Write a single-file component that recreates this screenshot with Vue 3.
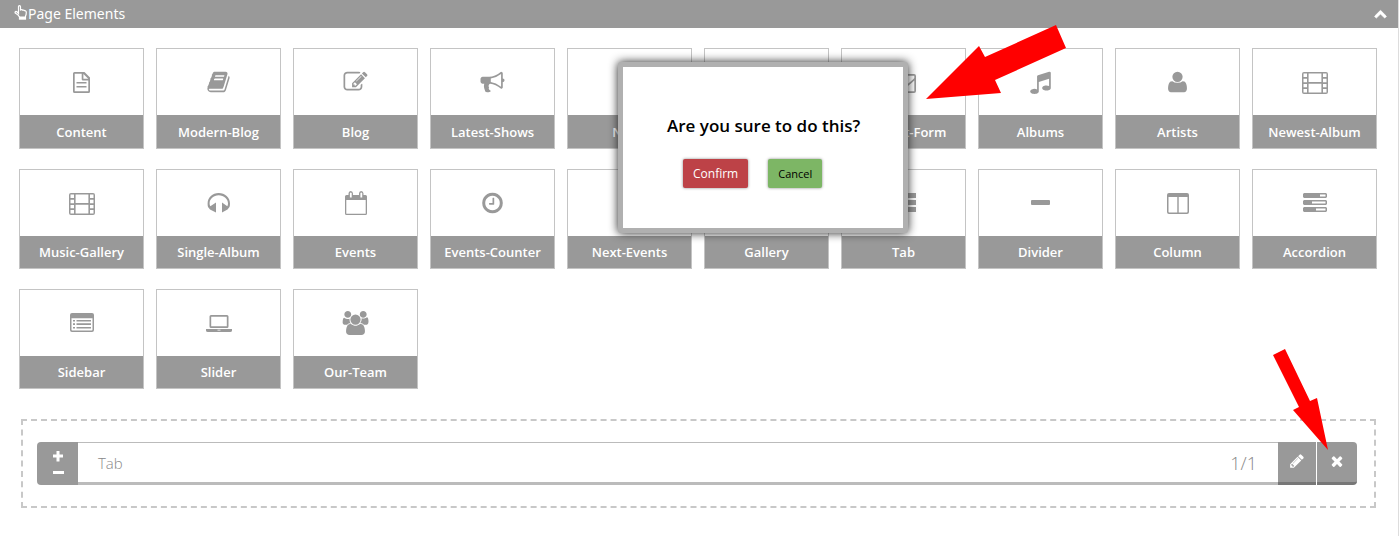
<script setup>
const WIDE = '-112 0 2016 1792'
const PX = '0 0 27 24'

const icons = {
  file: { box: PX, d: 'M6.500 2H16.500L22 7.500V21.500Q22 23 20.500 23H6.500Q5 23 5 21.500V3.500Q5 2 6.500 2ZM6.700 3.700V21.300H20.300V10.500H15Q13.700 10.500 13.700 9.200V3.700ZM15.400 4V8.800H20.200ZM8.500 12H18.500V13.600H8.500ZM8.500 16H18.500V17.600H8.500Z' },
  book: { box: WIDE, d: 'M1703 478q40 57 18 129l-275 906q-19 64-76.500 107.500t-122.500 43.500h-923q-77 0-148.500-53.500t-99.500-131.500q-24-67-2-127 0-4 3-27t4-37q1-8-3-21.500t-3-19.500q2-11 8-21t16.500-23.500 16.500-23.500q23-38 45-91.500t30-91.500q3-10 .5-30t-.5-28q3-11 17-28t17-23q21-36 42-92t25-90q1-9-2.500-32t.5-28q4-13 22-30.500t22-22.500q19-26 42.500-84.500t27.500-96.500q1-8-3-25.500t-2-26.500q2-8 9-18t18-23 17-21q8-12 16.500-30.500t15-35 16-36 19.500-32 26.500-23.500 36-11.500 47.500 5.500l-1 3q38-9 51-9h761q74 0 114 56t18 130l-274 906q-36 119-71.500 153.500t-128.500 34.500h-869q-27 0-38 15-11 16-1 43 24 70 144 70h923q29 0 56-15.500t35-41.500l300-987q7-22 5-57 38 15 59 43zm-1064 2q-4 13 2 22.500t20 9.500h608q13 0 25.500-9.500t16.500-22.500l21-64q4-13-2-22.500t-20-9.500h-608q-13 0-25.500 9.500t-16.500 22.500zm-83 256q-4 13 2 22.500t20 9.500h608q13 0 25.500-9.500t16.500-22.500l21-64q4-13-2-22.500t-20-9.500h-608q-13 0-25.500 9.500t-16.500 22.500z' },
  edit: { box: WIDE, d: 'M888 1184l116-116-152-152-116 116v56h96v96h56zm440-720q-16-16-33 1l-350 350q-17 17-1 33t33-1l350-350q17-17 1-33zm80 594v190q0 119-84.500 203.500t-203.500 84.500h-832q-119 0-203.500-84.500t-84.500-203.500v-832q0-119 84.500-203.500t203.500-84.500h832q63 0 117 25 15 7 18 23 3 17-9 29l-49 49q-14 14-32 8-23-6-45-6h-832q-66 0-113 47t-47 113v832q0 66 47 113t113 47h832q66 0 113-47t47-113v-126q0-13 9-22l64-64q15-15 35-7t20 29zm-96-738l288 288-672 672h-288v-288zm444 132l-92 92-288-288 92-92q28-28 68-28t68 28l152 152q28 28 28 68t-28 68z' },
  horn: { box: WIDE, d: 'M1664 640q53 0 90.500 37.500t37.500 90.500-37.500 90.500-90.500 37.500v384q0 52-38 90t-90 38q-417-347-812-380-58 19-91 66t-31 100.500 40 92.500q-20 33-23 65.500t6 58 33.500 55 48 50 61.500 50.500q-29 58-111.500 83t-168.500 11.500-132-55.500q-7-23-29.500-87.500t-32-94.500-23-89-15-101 3.500-98.500 22-110.500h-122q-66 0-113-47t-47-113v-192q0-66 47-113t113-47h480q435 0 896-384 52 0 90 38t38 90v384zm-128 604v-954q-394 302-768 343v270q377 42 768 341z' },
  mail: { box: PX, d: 'M4 4H24Q26 4 26 6V21Q26 23 24 23H4Q2 23 2 21V6Q2 4 4 4ZM3.700 5.700V8Q4.500 9.500 12 15.300Q14 16.600 16 15.300Q23.500 9.500 24.300 8V5.700ZM3.700 10.600V21.300H24.300V10.600Q22 13 17 16.800Q14 18.800 11 16.800Q6 13 3.700 10.600Z' },
  music: { box: WIDE, d: 'M1664 224v1120q0 50-34 89t-86 60.500-103.500 32-96.500 10.500-96.500-10.500-103.500-32-86-60.500-34-89 34-89 86-60.500 103.500-32 96.500-10.500q105 0 192 39v-537l-768 237v709q0 50-34 89t-86 60.500-103.500 32-96.500 10.500-96.500-10.500-103.500-32-86-60.500-34-89 34-89 86-60.500 103.500-32 96.500-10.500q105 0 192 39v-967q0-31 19-56.500t49-35.500l832-256q12-4 28-4 40 0 68 28t28 68z' },
  user: { box: WIDE, d: 'M1600 1399q0 109-62.500 187t-150.500 78h-982q-88 0-150.500-78t-62.500-187q0-85 8.500-160.500t31.500-152 58.500-131 94-89 134.500-34.500q131 128 377 128t377-128q76 0 134.500 34.500t94 89 58.500 131 31.500 152 8.500 160.500zm-320-887q0 159-112.500 271.500t-271.500 112.500-271.500-112.500-112.500-271.500 112.500-271.500 271.500-112.500 271.500 112.500 112.500 271.500z' },
  film: { box: PX, d: 'M3 2H25Q27 2 27 4V22Q27 24 25 24H3Q1 24 1 22V4Q1 2 3 2ZM2.500 3.600V7H6V3.600ZM2.500 8.800V12.300H6V8.800ZM2.500 14V17.300H6V14ZM2.500 19V22.500H6V19ZM22 3.600V7H25.500V3.600ZM22 8.800V12.300H25.500V8.800ZM22 14V17.300H25.500V14ZM22 19V22.500H25.500V19ZM7.600 3.500V12.100H20.400V3.500ZM7.600 13.700V22.500H20.400V13.700Z' },
  phones: { box: PX, d: 'M3 16Q2.600 14.500 2.600 12.500C2.600 6.500 7.500 2 13.700 2S25 6.500 25 12.500Q25 14.500 24.500 16L22.500 18.500L17 21.500V11.500L22.300 15.200Q23 14 23 12.500C23 8 19 4.300 13.700 4.300S4.600 8 4.600 12.500Q4.600 14 5.300 15.200L11 11.500V21.500L5 18.500Z' },
  calendar: { box: PX, d: 'M4.500 4H6.500V2.500Q6.500 0 8.700 0T11 2.500V4H17V2.500Q17 0 19.200 0T21.500 2.500V4H23.500Q25 4 25 5.500V22.500Q25 24 23.500 24H4.500Q3 24 3 22.500V5.500Q3 4 4.500 4ZM4.300 9V22.700H23.700V9ZM7.900 2V6.500H9.700V2Q8.800 1 7.900 2ZM18.400 2V6.500H20.200V2Q19.300 1 18.400 2Z' },
  clock: { box: WIDE, d: 'M1024 544v448q0 14-9 23t-23 9h-320q-14 0-23-9t-9-23v-64q0-14 9-23t23-9h224v-352q0-14 9-23t23-9h64q14 0 23 9t9 23zm416 352q0-148-73-273t-198-198-273-73-273 73-198 198-73 273 73 273 198 198 273 73 273-73 198-198 73-273zm224 0q0 209-103 385.500t-279.500 279.500-385.500 103-385.500-103-279.500-279.500-103-385.500 103-385.500 279.500-279.500 385.500-103 385.500 103 279.500 279.500 103 385.500z' },
  list: { box: PX, d: 'M2 2H8V7H2ZM10 2H26V7H10ZM2 9H8V14H2ZM10 9H26V14H10ZM2 16H8V21H2ZM10 16H26V21H10Z' },
  minus: { box: PX, d: 'M5 9H22Q23 9 23 10V13Q23 14 22 14H5Q4 14 4 13V10Q4 9 5 9Z' },
  columns: { box: PX, d: 'M5 2H23Q25 2 25 4V21Q25 23 23 23H5Q3 23 3 21V4Q3 2 5 2ZM4.500 6V20.800Q4.500 21.500 5.200 21.500H13.300V6ZM14.700 6V21.500H22.800Q23.500 21.500 23.500 20.800V6Z' },
  tasks: { box: PX, d: 'M3 2H25L26 3V6L25 7H3L2 6V3ZM3 9H25L26 10V13L25 14H3L2 13V10ZM3 16H25L26 17V20L25 21H3L2 20V17ZM19 3.600V5.400H24.500V3.600ZM11 10.600V12.400H24.500V10.600ZM15 17.600V19.400H24.500V17.600Z' },
  panel: { box: PX, d: 'M4 2H24Q26 2 26 4V19Q26 21 24 21H4Q2 21 2 19V4Q2 2 4 2ZM3.500 7.200V18.700Q3.500 19.500 4.300 19.500H23.700Q24.500 19.500 24.500 18.700V7.200ZM5 9H7V10.600H5ZM8.500 9H23V10.600H8.500ZM5 12.300H7V13.900H5ZM8.500 12.300H23V13.900H8.500ZM5 16H7V17.600H5ZM8.500 16H23V17.600H8.500Z' },
  laptop: { box: PX, d: 'M6 4H22Q23.500 4 23.500 5.500V15.500Q23.500 17 22 17H6Q4.500 17 4.500 15.500V5.500Q4.500 4 6 4ZM6.200 5.700V15.300H21.800V5.700ZM1 18H27V19.500Q27 21 25 21H3Q1 21 1 19.500ZM12.500 18.800V19.600H15.500V18.800Z' },
  team: { box: '16 0 2016 1792', d: 'M657 896q-162 5-265 128h-134q-82 0-138-40.500t-56-118.500q0-353 124-353 6 0 43.500 21t97.500 42.500 119 21.500q67 0 133-23-5 37-5 66 0 159 93 293zm1071 637q0 120-73 189.500t-194 69.500h-874q-121 0-194-69.500t-73-189.500q0-53 3.500-103.500t14-109 26.500-108.500 43-97.500 62-81 85.500-53.500 111.500-20q10 0 43 21.500t73 48 107 48 135 21.500 135-21.500 107-48 73-48 43-21.500q61 0 111.500 20t85.500 53.500 62 81 43 97.500 26.500 108.500 14 109 3.500 103.500zm-1024-1277q0 106-75 181t-181 75-181-75-75-181 75-181 181-75 181 75 75 181zm704 384q0 159-112.500 271.500t-271.500 112.500-271.500-112.500-112.500-271.500 112.500-271.500 271.500-112.500 271.500 112.500 112.500 271.500zm576 225q0 78-56 118.500t-138 40.500h-134q-103-123-265-128 93-134 93-293 0-29-5-66 66 23 133 23 59 0 119-21.500t97.500-42.500 43.500-21q124 0 124 353zm-128-609q0 106-75 181t-181 75-181-75-75-181 75-181 181-75 181 75 75 181z' },
}

const tiles = [
  ['Content', 'file'], ['Modern-Blog', 'book'], ['Blog', 'edit'], ['Latest-Shows', 'horn'], ['News', ''],
  ['', ''], ['Contact-Form', 'mail'], ['Albums', 'music'], ['Artists', 'user'], ['Newest-Album', 'film'],
  ['Music-Gallery', 'film'], ['Single-Album', 'phones'], ['Events', 'calendar'], ['Events-Counter', 'clock'], ['Next-Events', ''],
  ['Gallery', ''], ['Tab', 'list'], ['Divider', 'minus'], ['Column', 'columns'], ['Accordion', 'tasks'],
  ['Sidebar', 'panel'], ['Slider', 'laptop'], ['Our-Team', 'team'],
].map(([label, icon]) => ({ label, icon: icons[icon] }))
</script>

<template>
  <main class="page">
    <header class="bar">
      <svg class="hand" viewBox="0 0 14 15" aria-hidden="true">
        <path d="M4.500 8.500V1.800Q4.500 .7 5.500 .7T6.500 1.800V5Q8 4.300 8.700 5.200Q10 4.700 10.500 5.700Q12.300 5.500 12.300 7.500Q12.300 9.500 11.500 11V13.800H5.500V12Q4.500 10 2 8.500Q.7 7.800 1.200 6.800Q2 6 3.200 7Z" />
        <path class="cuff" d="M5 11.500H12V14.400H5Z" />
      </svg>
      <h1>Page Elements</h1>
      <button class="toggle" type="button" aria-label="Collapse">
        <svg viewBox="0 0 1792 1792"><path d="M1683 1331l-166 165q-19 19-45 19t-45-19l-531-531-531 531q-19 19-45 19t-45-19l-166-165q-19-19-19-45.500t19-45.500l742-741q19-19 45-19t45 19l742 741q19 19 19 45.500t-19 45.500z" /></svg>
      </button>
    </header>

    <section class="tiles">
      <button v-for="(t, i) in tiles" :key="i" class="tile" type="button">
        <span class="pic">
          <svg v-if="t.icon" :viewBox="t.icon.box" aria-hidden="true"><path fill-rule="evenodd" :d="t.icon.d" /></svg>
        </span>
        <span class="label">{{ t.label }}</span>
      </button>
    </section>

    <section class="drop">
      <div class="row">
        <div class="size">
          <button type="button" aria-label="Wider"><svg viewBox="0 0 12 12"><path d="M4.500 1H7.500V4.500H11V7.500H7.500V11.500H4.500V7.500H1V4.500H4.500Z" /></svg></button>
          <button type="button" aria-label="Narrower"><svg viewBox="0 0 12 12"><path d="M1 5H12V8H1Z" /></svg></button>
        </div>
        <div class="body">
          <span class="name">Tab</span>
          <span class="ratio">1/1</span>
        </div>
        <button class="act" type="button" aria-label="Edit">
          <svg viewBox="0 0 1792 1792"><path d="M491 1536l91-91-235-235-91 91v107h128v128h107zm523-928q0-22-22-22-10 0-17 7l-542 542q-7 7-7 17 0 22 22 22 10 0 17-7l542-542q7-7 7-17zm-54-192l416 416-832 832h-416v-416zm683 96q0 53-37 90l-166 166-416-416 166-165q36-38 90-38 53 0 91 38l235 234q37 39 37 91z" /></svg>
        </button>
        <button class="act last" type="button" aria-label="Remove">
          <svg viewBox="0 0 1792 1792"><path d="M1490 1322q0 40-28 68l-136 136q-28 28-68 28t-68-28l-294-294-294 294q-28 28-68 28t-68-28l-136-136q-28-28-28-68t28-68l294-294-294-294q-28-28-28-68t28-68l136-136q28-28 68-28t68 28l294 294 294-294q28-28 68-28t68 28l136 136q28 28 28 68t-28 68l-294 294 294 294q28 28 28 68z" /></svg>
        </button>
      </div>
    </section>

    <div class="dialog" role="dialog" aria-labelledby="question">
      <p id="question">Are you sure to do this?</p>
      <div class="choices">
        <button class="confirm" type="button">Confirm</button>
        <button class="cancel" type="button">Cancel</button>
      </div>
    </div>

    <svg class="arrow big" viewBox="0 0 140 74" aria-hidden="true"><path d="M0 74L53 21L59 32L130 0L140 23L69 55L75 68Z" /></svg>
    <svg class="arrow small" viewBox="0 0 55 101" aria-hidden="true"><path d="M55 101L44 49L37 52L12 0L0 6L26 58L20 61Z" /></svg>
  </main>
</template>

<style>
body {
  background: #fff;
}
</style>

<style scoped>
.page {
  position: relative;
  box-sizing: border-box;
  min-height: 100vh;
  border-right: 1px solid #ddd;
  font-family: "Open Sans", "Noto Sans", sans-serif;
  font-size: 13px;
}
button {
  margin: 0;
  padding: 0;
  border: 0;
  background: none;
  font: inherit;
  color: inherit;
}
svg {
  display: block;
  fill: currentColor;
}
.bar {
  display: flex;
  align-items: center;
  height: 28px;
  padding: 0 11px 0 14px;
  background: #999;
  color: #fff;
}
.hand {
  width: 14px;
  height: 15px;
  margin-bottom: 4px;
  fill: none;
  stroke: currentColor;
  stroke-width: 1.2;
}
.hand .cuff {
  fill: currentColor;
  stroke: none;
}
.bar h1 {
  flex: 1;
  margin: 0;
  font-family: "Noto Sans", "Open Sans", sans-serif;
  font-size: 14px;
  font-weight: 400;
  line-height: 20px;
}
.toggle svg {
  width: 13px;
  height: 13px;
  margin-bottom: 2px;
  stroke: currentColor;
  stroke-width: 90;
}
.tiles {
  display: grid;
  grid-template-columns: repeat(auto-fill, minmax(125px, 1fr));
  grid-template-rows: 101px;
  grid-auto-rows: 100px;
  gap: 20px 12px;
  padding: 20px 21px 0 19px;
}
.tile {
  display: flex;
  flex-direction: column;
  border: 1px solid #c4c4c4;
  color: #999;
}
.pic {
  display: flex;
  align-items: center;
  justify-content: center;
  width: 100%;
  height: 66px;
}
.pic svg {
  width: 27px;
  height: 24px;
}
.label {
  flex: 1;
  display: flex;
  align-items: center;
  justify-content: center;
  width: 100%;
  background: #999;
  color: #fff;
  font-weight: 600;
  line-height: 18px;
}
.drop {
  margin: 30px 22px 0 21px;
  padding: 21px 17px 21px 14px;
  border: 2px dashed #c8c8c8;
}
.row {
  display: flex;
  height: 43px;
}
.size {
  display: flex;
  flex-direction: column;
  align-items: center;
  justify-content: center;
  gap: 4px;
  width: 41px;
  border-radius: 4px 0 0 4px;
  background: #999;
  color: #fff;
}
.size svg {
  width: 12px;
  height: 12px;
}
.body {
  flex: 1;
  display: flex;
  align-items: center;
  justify-content: space-between;
  padding: 0 21px 0 20px;
  border-top: 1px solid #bbb;
  border-bottom: 3px solid #bbb;
  color: #888;
  font-size: 15px;
  font-weight: 300;
  line-height: 20px;
}
.ratio {
  font-size: 18px;
}
.act {
  display: flex;
  align-items: center;
  justify-content: center;
  width: 38px;
  border-bottom: 3px solid #777;
  background: #999;
  color: #fff;
}
.act svg {
  width: 16px;
  height: 16px;
  margin-bottom: 2px;
}
.act.last {
  width: 40px;
  margin-left: 1px;
  border-radius: 0 4px 4px 0;
}
.dialog {
  position: absolute;
  top: 62px;
  left: 618px;
  box-sizing: border-box;
  width: 290px;
  padding: 48px 44px 40px;
  border: 5px solid #b0b0b0;
  border-radius: 3px;
  background: #fff;
  box-shadow: 0 0 10px #222;
  color: #000;
}
.dialog p {
  margin: 0 0 22px;
  font-size: 17px;
  font-weight: 600;
  line-height: 22px;
  white-space: nowrap;
}
.choices {
  display: flex;
  gap: 20px;
  padding-left: 16px;
}
.choices button {
  height: 29px;
  padding: 0 10px;
  border-radius: 2px;
  box-shadow: 0 0 3px #888;
  font-weight: 500;
}
.choices .confirm {
  background: #bd4247;
  color: #fff;
  font-size: 12px;
}
.choices .cancel {
  background: #7db665;
  font-size: 11px;
}
.arrow {
  position: absolute;
  fill: #f00;
}
.big {
  top: 25px;
  left: 926px;
  width: 140px;
  height: 74px;
}
.small {
  top: 349px;
  left: 1273px;
  width: 55px;
  height: 101px;
}
</style>
